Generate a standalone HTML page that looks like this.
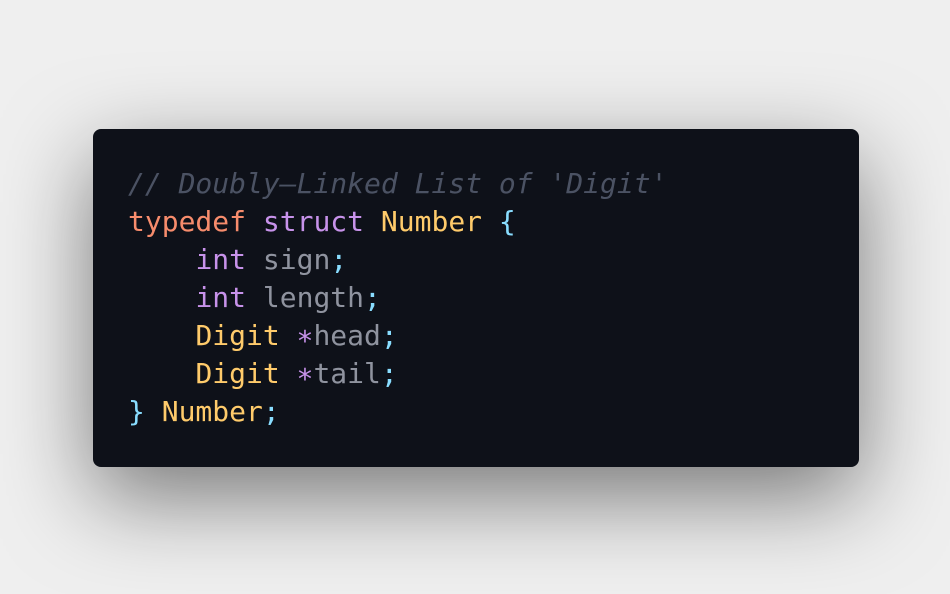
<!DOCTYPE html>
<html><head><meta charset="utf-8"><style>
html,body{margin:0;width:950px;height:594px;background:#efefef;overflow:hidden}
.box{position:absolute;left:93px;top:129px;width:766px;height:338px;background:#0e1119;border-radius:8px;box-shadow:0 30px 90px rgba(0,0,0,.5)}
pre{margin:0;position:absolute;left:35px;top:36px;font-family:"DejaVu Sans Mono","Liberation Mono",monospace;font-size:28px;line-height:38px;color:#8f939f}
.c{color:#4b5263;font-style:italic}.o{color:#f78c6c}.p{color:#c792ea}.y{color:#ffcb6b}.b{color:#89ddff}
</style></head><body>
<div class="box"><pre><span class="c">// Doubly–Linked List of 'Digit'</span>
<span class="o">typedef</span> <span class="p">struct</span> <span class="y">Number</span> <span class="b">{</span>
    <span class="p">int</span> sign<span class="b">;</span>
    <span class="p">int</span> length<span class="b">;</span>
    <span class="y">Digit</span> <span class="p">∗</span>head<span class="b">;</span>
    <span class="y">Digit</span> <span class="p">∗</span>tail<span class="b">;</span>
<span class="b">}</span> <span class="y">Number</span><span class="b">;</span></pre></div>
</body></html>
